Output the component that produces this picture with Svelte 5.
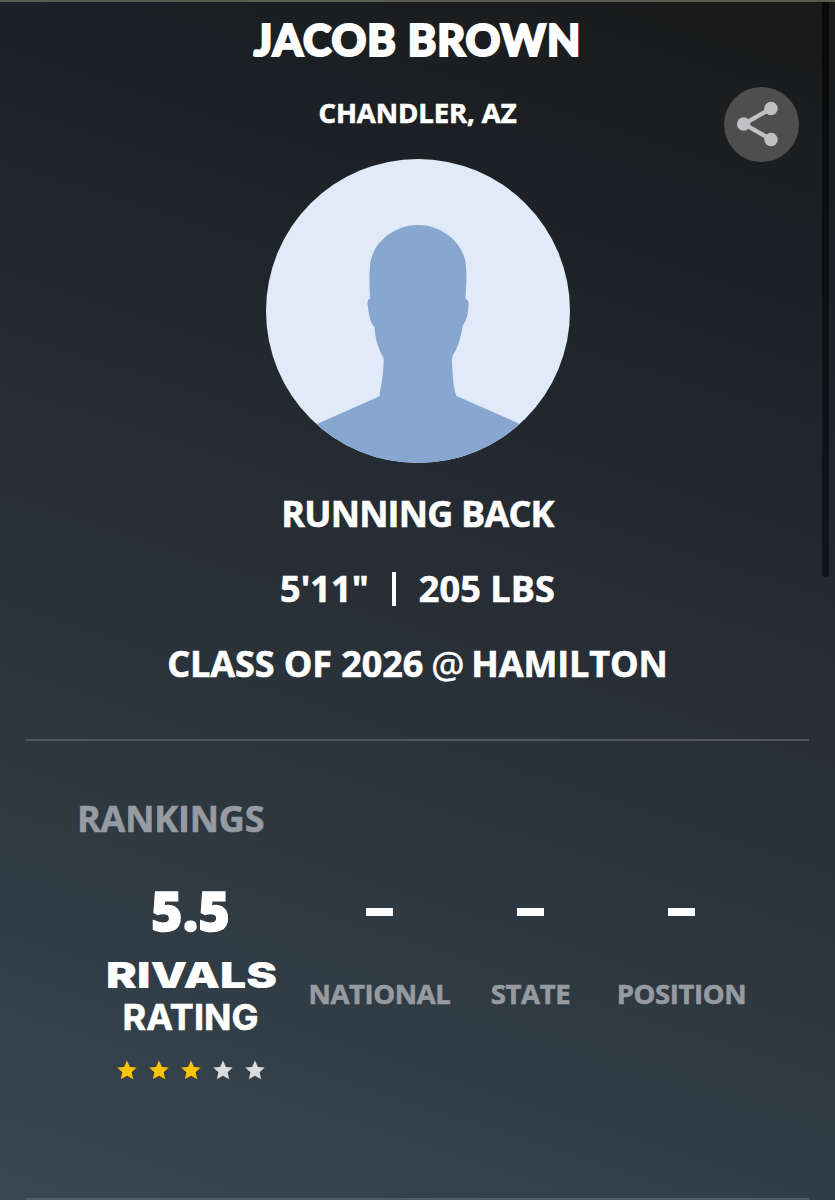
<script>
  const player = {
    name: 'Jacob Brown',
    hometown: 'Chandler, AZ',
    position: 'Running Back',
    height: `5'11"`,
    weight: '205 LBS',
    year: 'Class of 2026',
    school: 'Hamilton'
  }

  const rating = '5.5'
  const stars = [true, true, true, false, false]
  const rankings = ['National', 'State', 'Position']
</script>

<main class="profile">
  <header class="hero">
    <h1 class="name">{player.name}</h1>
    <p class="hometown">{player.hometown}</p>

    <svg class="avatar" viewBox="0 0 304 304">
      <defs>
        <clipPath id="avatar-clip"><circle cx="152" cy="152" r="152" /></clipPath>
      </defs>
      <g clip-path="url(#avatar-clip)">
        <rect width="304" height="304" fill="#e0eaf9" />
        <path
          fill="#87a6d0"
          d="M152 66C176 66 199 84 200 108C201 119 200 129 199.500 139.500C202 141 203 143 202.500 146C202 154 201.500 160 197 166C195 176 193 187 187 196C185.500 200 186 206 186.500 212C187 222 188 231 190.500 237L254 265L270 304H34L51 265L112 238C113.500 238 114 236 114 233C116 222 118 211 117.500 199C112 190 109 178 108.500 168C104 163 103.500 159 102 148C101 144 101 141 104 139.500C103.500 128 103 117 104 108C105 84 128 66 152 66Z"
        />
      </g>
    </svg>

    <p class="line role">{player.position}</p>
    <p class="line body"><span>{player.height}</span><i class="bar"></i><span>{player.weight}</span></p>
    <p class="line school"><span>{player.year}</span><span class="at">@</span><span>{player.school}</span></p>

    <button class="share" aria-label="Share">
      <svg viewBox="0 0 75 75">
        <path d="M47 21.500L20 37L47 52.500" fill="none" stroke="#bfc1c5" stroke-width="4.300" />
        <circle cx="47" cy="21.500" r="6.700" />
        <circle cx="19.700" cy="37" r="6.700" />
        <circle cx="47" cy="52.500" r="6.700" />
      </svg>
    </button>
  </header>

  <section class="rankings">
    <h2>Rankings</h2>
    <div class="columns">
      <div class="rating">
        <strong class="score">{rating}</strong>
        <svg class="brand" viewBox="0 0 190 50">
          <text x="10" y="37" textLength="171" lengthAdjust="spacingAndGlyphs">RIVALS</text>
        </svg>
        <span class="rating-label">RATING</span>
        <div class="stars">
          {#each stars as on}
            <svg class:on viewBox="0 0 20 20">
              <path d="M10 .500L12.900 7L19.700 7.600L14.600 12.200L16.200 19.300L10 15.700L3.800 19.300L5.400 12.200L.300 7.600L7.100 7Z" />
            </svg>
          {/each}
        </div>
      </div>
      {#each rankings as label}
        <div class="rank">
          <i class="dash"></i>
          <span>{label}</span>
        </div>
      {/each}
    </div>
  </section>

  <div class="scrollbar"></div>
</main>

<style>
:global(body) {
  margin: 0;
  background: #1a1a1a;
}
.profile {
  position: relative;
  box-sizing: border-box;
  width: 835px;
  height: 1200px;
  overflow: hidden;
  border-top: 2px solid #5a5c53;
  background: linear-gradient(198deg, #1a1a1a 2%, #1c2024 17%, #272e36 50%, #323e47 82%, #3a4753 100%);
  color: #fff;
  font-family: "Open Sans", "Noto Sans", sans-serif;
  font-weight: 700;
  -webkit-text-stroke: 0.6px currentColor;
}
h1, h2, p {
  margin: 0;
  text-transform: uppercase;
  white-space: nowrap;
}
.hero {
  position: relative;
  display: flex;
  flex-direction: column;
  align-items: center;
  box-sizing: border-box;
  height: 737px;
  padding: 8px 0 0;
}
.name {
  font-family: Lato, sans-serif;
  font-size: 43px;
  font-weight: 900;
  line-height: 60px;
  letter-spacing: 0.9px;
  -webkit-text-stroke: 2.2px #fff;
}
.hometown {
  margin-top: 23px;
  font-size: 27.500px;
  line-height: 40px;
  letter-spacing: -0.1px;
}
.avatar {
  display: block;
  width: 304px;
  height: 304px;
  margin: 26px 0 13px;
}
.line {
  display: flex;
  align-items: center;
  height: 75px;
  font-size: 36px;
  line-height: 76px;
}
.role {
  letter-spacing: -0.8px;
}
.body {
  letter-spacing: 0.1px;
}
.bar {
  width: 4px;
  height: 34px;
  margin: 0 23px;
  background: #fff;
}
.at {
  margin: 0 7px 0 8px;
  font-size: 37px;
  font-weight: 500;
}
.school {
  letter-spacing: -0.1px;
}
.share {
  position: absolute;
  top: 85px;
  right: 36px;
  width: 75px;
  height: 75px;
  padding: 0;
  border: 0;
  border-radius: 50%;
  background: #4e4e4e;
}
.share svg {
  display: block;
  fill: #bfc1c5;
}
.rankings {
  box-sizing: border-box;
  height: 461px;
  margin: 0 26px;
  padding: 50px 0 0 51px;
  border-top: 2px solid #50565b;
  border-bottom: 2px solid #505b65;
}
h2 {
  color: #969ba1;
  font-size: 36px;
  line-height: 55px;
  letter-spacing: -0.2px;
}
.columns {
  display: flex;
  margin-top: 34px;
}
.rating {
  display: flex;
  flex-direction: column;
  align-items: center;
  width: 227px;
}
.score {
  font-family: "Noto Sans", sans-serif;
  font-size: 54px;
  font-weight: 900;
  line-height: 60px;
  -webkit-text-stroke: 1.4px #fff;
}
.brand {
  width: 190px;
  height: 50px;
  margin: 11px 0 -4px;
}
.brand text {
  fill: #fff;
  font: 900 35.500px Inter, sans-serif;
  -webkit-text-stroke: 0;
}
.rating-label {
  font-family: Inter, sans-serif;
  font-size: 36px;
  line-height: 40px;
}
.stars {
  display: flex;
  gap: 12px;
  margin-top: 23px;
}
.stars svg {
  width: 20px;
  height: 20px;
  fill: #dbdbde;
}
.stars svg.on {
  fill: #fdc500;
}
.rank {
  display: flex;
  flex-direction: column;
  align-items: center;
  width: 151px;
  color: #969ba1;
  font-size: 27.500px;
  line-height: 40px;
  letter-spacing: -0.4px;
  text-transform: uppercase;
}
.dash {
  width: 27px;
  height: 8px;
  margin: 28px 0 58px;
  background: #fff;
}
.scrollbar {
  position: absolute;
  top: -2px;
  right: 6px;
  width: 7px;
  height: 577px;
  border-radius: 0 0 4px 4px;
  background: linear-gradient(#0a0a0a, #10151a);
}
</style>
